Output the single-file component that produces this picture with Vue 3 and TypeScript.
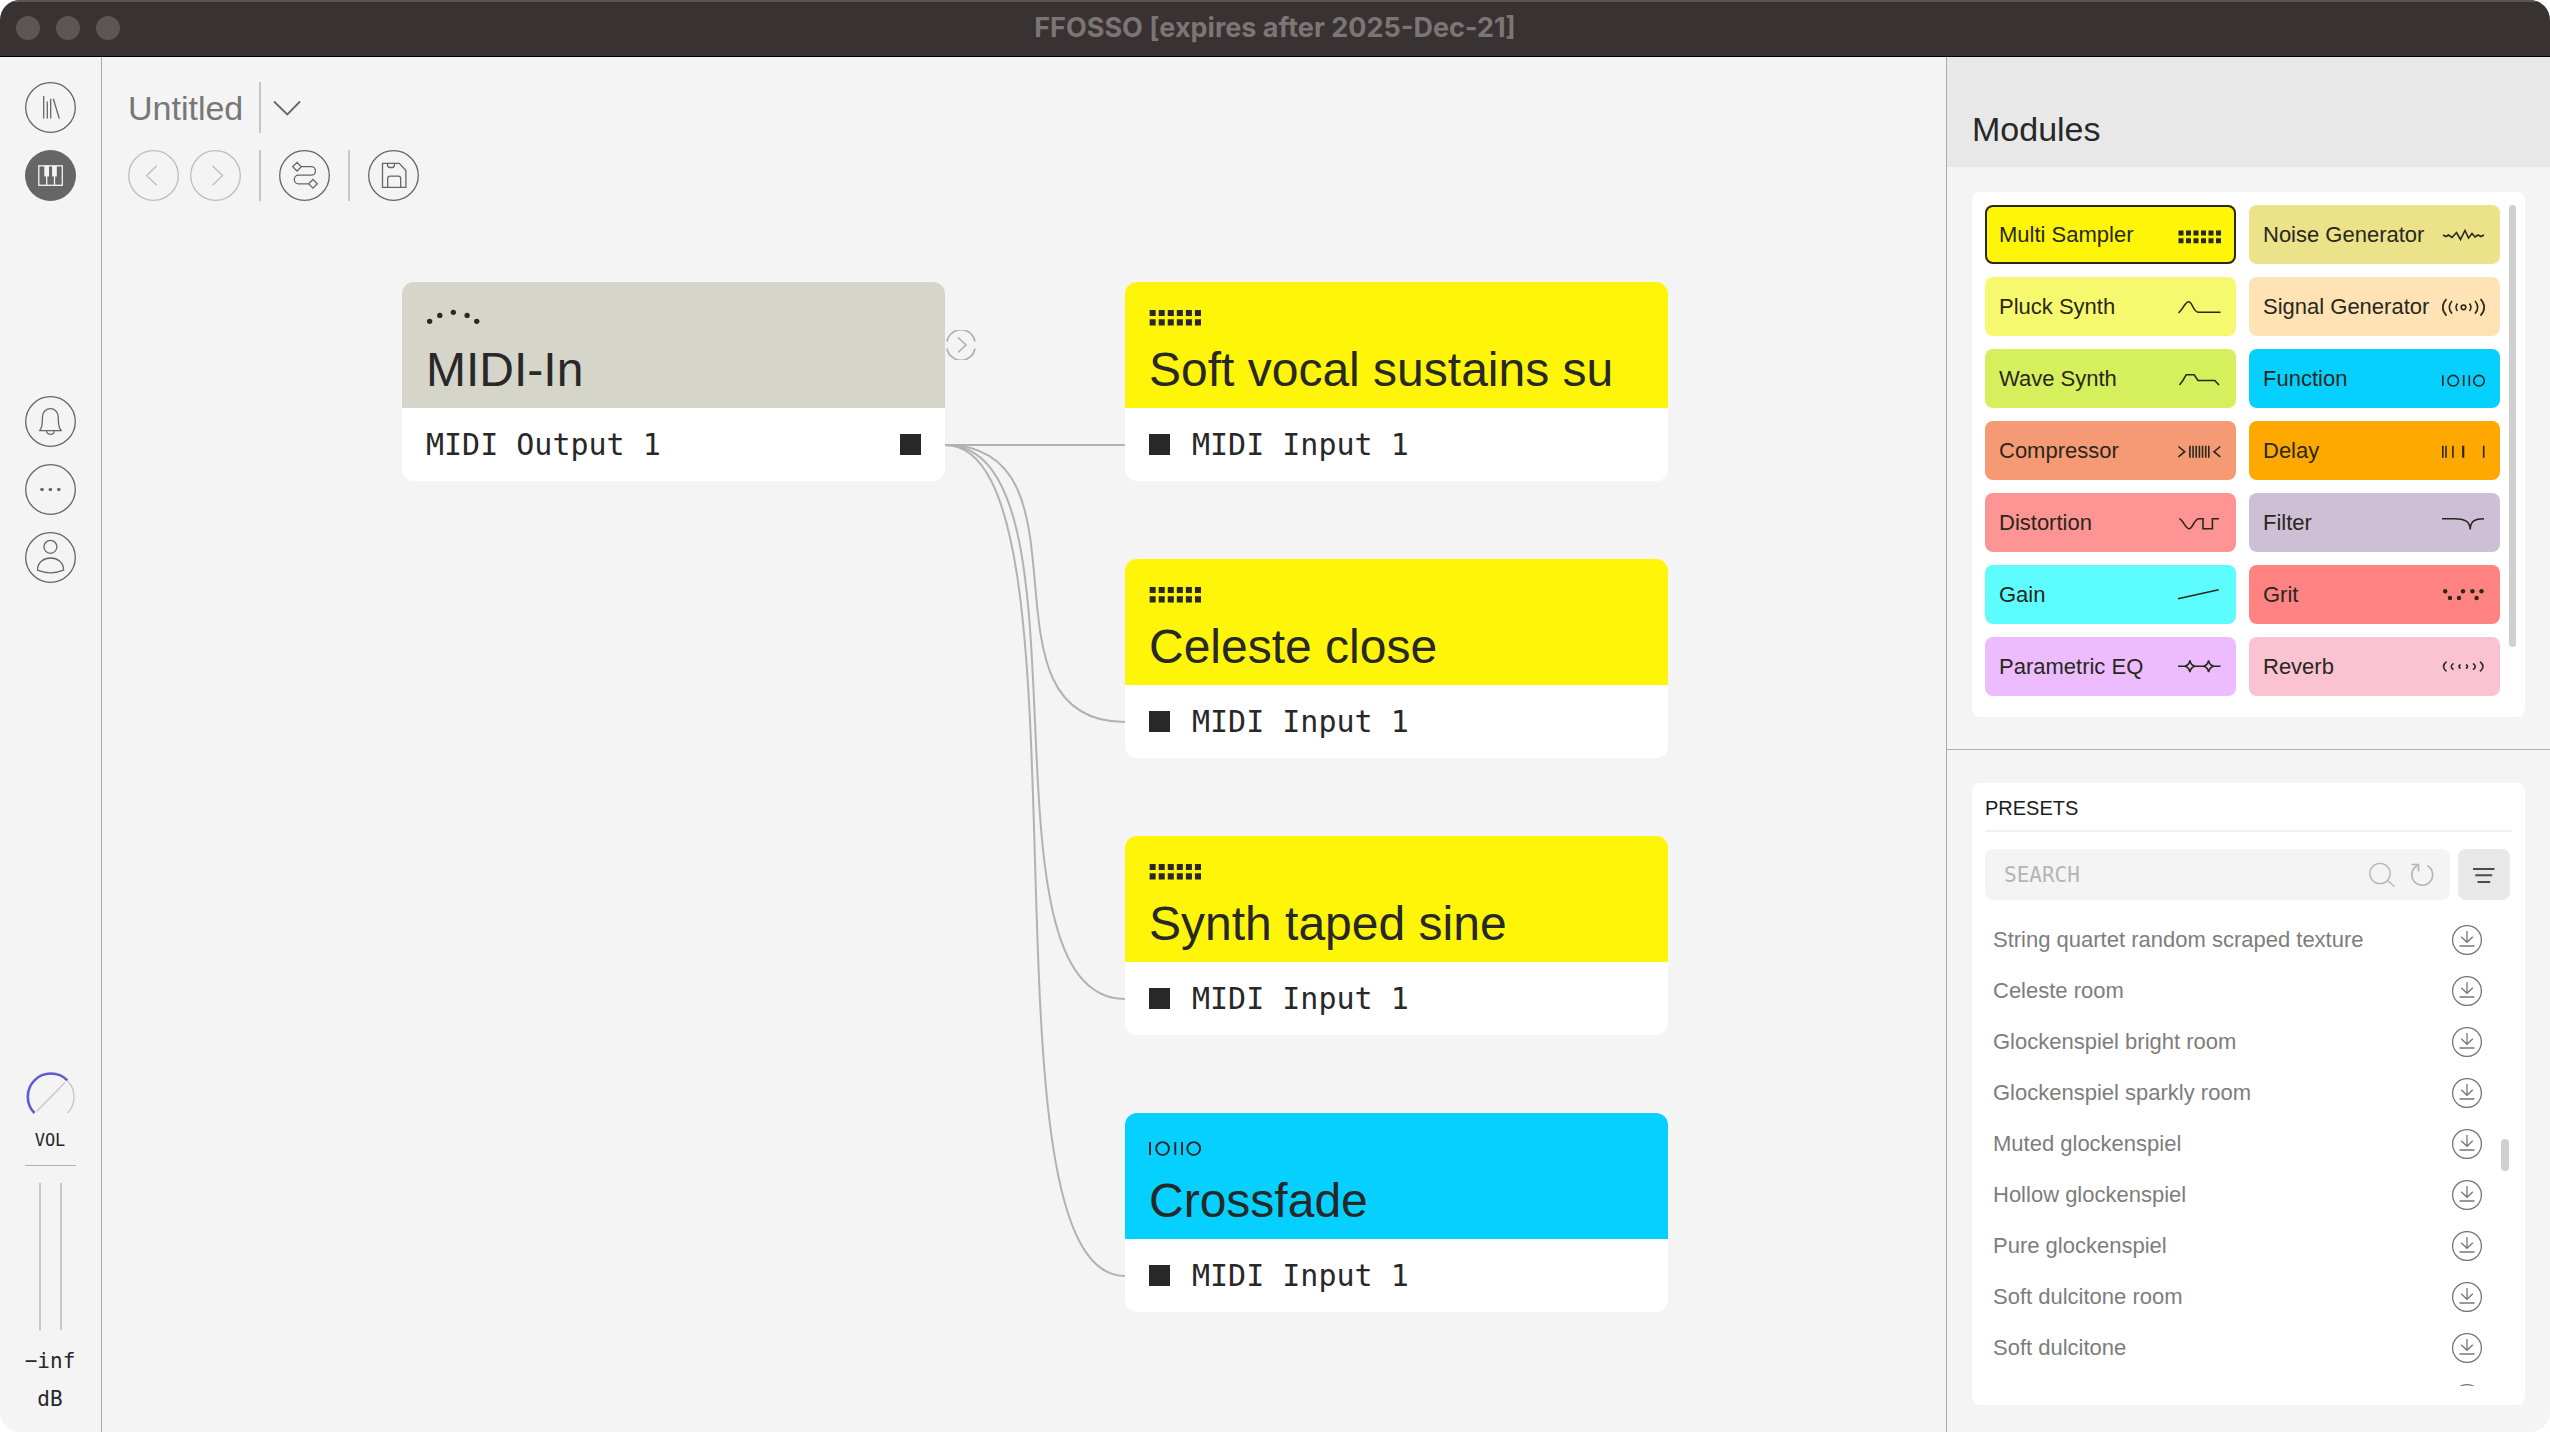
<script setup lang="ts">
import { ref } from 'vue'

interface ModuleKind { name: string; icon: string; color: string }
interface PatchNode { title: string; icon: string; color: string; x: number; y: number; port: string; output?: boolean }

const icons: Record<string, string> = {
  sampler: [0, 1, 2, 3, 4, 5].map(i => `<path class="solid" d="M${i * 7.5 + 0.5} 7.5h5v5h-5zM${i * 7.5 + 0.5} 15.2h5v5h-5z"/>`).join(''),
  noise: '<path d="M1 12L4 13.5L6.5 12L10 14.5L14.5 9.5L18.5 16.5L23 7.5L26.500 15L30 10.500L33 14L36 12L39 13.500L42 12"/>',
  pluck: '<path d="M.4 17.7C4 16 7 6.700 10.700 6.700C14.500 6.700 15 17.300 20.500 17.300H42.500"/>',
  signal: '<circle cx="21.500" cy="12.300" r="2.300"/><path d="M15.500 8.500Q12.500 12.300 15.500 16.100M27.500 8.500Q30.500 12.300 27.500 16.100M10 6Q4.500 12.300 10 18.600M33 6Q38.500 12.300 33 18.600M4.500 4Q-3 12.300 4.500 20.600M38.500 4Q46 12.300 38.500 20.600"/>',
  wave: '<path d="M1.500 18Q5 14 8.300 7.700H16.200L20 13.500H36.800L41 18"/>',
  binary: '<path d="M.8 8.300V19M21.700 8.300V19M27.300 8.300V19"/><circle cx="11.200" cy="13.700" r="5.300"/><circle cx="37" cy="13.700" r="5.300"/>',
  compressor: '<path d="M.4 7.500L6.700 12.700L.4 17.900M42.300 7.500L36 12.700L42.300 17.900M11.900 6.700v12M15.100 6.700v12M18.200 6.700v12M21.400 6.700v12M24.500 6.700v12M27.700 6.700v12M30.800 6.700v12"/>',
  delay: '<path d="M.8 6.700v12M4 6.700v12M10.900 6.700v12M41.700 6.700v12"/><path stroke-width="2.200" d="M21.200 6.700v12"/>',
  distortion: '<path d="M1.200 7.700C5 8 7 17.700 11 17.700C15 17.700 16 7.700 21 7.700H25V17.700H34.400V7.700H41"/>',
  filter: '<path d="M0 7.700H12C22 7.700 28 10 28.200 18.500C28.500 10 33 7.700 42 7.700"/>',
  gain: '<path d="M0 15.700L40.700 6.700"/>',
  grit: [[3.2, 8.3], [21, 8.3], [30.4, 8.3], [39.5, 8.3], [8, 15], [17, 15], [34.6, 15]].map(([x, y]) => `<circle class="solid" cx="${x}" cy="${y}" r="2.200"/>`).join(''),
  eq: '<path d="M0 11.200H7M16.500 11.200H26M35.500 11.200H42.500M11.900 5.400Q12.700 10.400 17.300 11.200Q12.700 12 11.900 17Q11.100 12 6.500 11.200Q11.100 10.400 11.900 5.400ZM30.600 5.400Q31.400 10.400 36 11.200Q31.400 12 30.600 17Q29.800 12 25.200 11.200Q29.800 10.400 30.600 5.400Z"/>',
  reverb: '<path d="M4.500 6.700Q-1.500 11.500 4.500 16.300M11.500 8.300Q7 11.500 11.500 14.700M18.500 9.500Q15.500 11.500 18.500 13.500M38 6.700Q44 11.500 38 16.300M31 8.300Q35.500 11.500 31 14.700M24 9.500Q27 11.500 24 13.500"/>',
  midi: [[3, 16.8], [11.4, 11.9], [22.6, 9.4], [34, 11.9], [42, 16.8]].map(([x, y]) => `<circle class="solid" cx="${x}" cy="${y}" r="2.200"/>`).join(''),
}

const modules: ModuleKind[] = [
  { name: 'Multi Sampler', icon: 'sampler', color: '#fff508' },
  { name: 'Noise Generator', icon: 'noise', color: '#ebe289' },
  { name: 'Pluck Synth', icon: 'pluck', color: '#f6f96d' },
  { name: 'Signal Generator', icon: 'signal', color: '#ffe3b4' },
  { name: 'Wave Synth', icon: 'wave', color: '#d6ef5d' },
  { name: 'Function', icon: 'binary', color: '#05d0ff' },
  { name: 'Compressor', icon: 'compressor', color: '#f59a74' },
  { name: 'Delay', icon: 'delay', color: '#ffa800' },
  { name: 'Distortion', icon: 'distortion', color: '#ff9494' },
  { name: 'Filter', icon: 'filter', color: '#cdbfd6' },
  { name: 'Gain', icon: 'gain', color: '#5cfcff' },
  { name: 'Grit', icon: 'grit', color: '#ff8383' },
  { name: 'Parametric EQ', icon: 'eq', color: '#edbcff' },
  { name: 'Reverb', icon: 'reverb', color: '#fbc2d1' },
]
const selected = ref('Multi Sampler')

const nodes: PatchNode[] = [
  { title: 'MIDI-In', icon: 'midi', color: '#d5d5c9', x: 300, y: 225, port: 'MIDI Output 1', output: true },
  { title: 'Soft vocal sustains su', icon: 'sampler', color: '#fff508', x: 1023, y: 225, port: 'MIDI Input 1' },
  { title: 'Celeste close', icon: 'sampler', color: '#fff508', x: 1023, y: 502, port: 'MIDI Input 1' },
  { title: 'Synth taped sine', icon: 'sampler', color: '#fff508', x: 1023, y: 779, port: 'MIDI Input 1' },
  { title: 'Crossfade', icon: 'binary', color: '#05d0ff', x: 1023, y: 1056, port: 'MIDI Input 1' },
]

// Cables leave the source port sideways and arrive at each input sideways.
const portOffset = 163
const nodeWidth = 543
const bend = 156
const source = nodes[0]
const cables = nodes.slice(1).map(n => {
  const x1 = source.x + nodeWidth
  const y1 = source.y + portOffset
  const y2 = n.y + portOffset
  return `M${x1} ${y1}C${x1 + bend} ${y1} ${n.x - bend} ${y2} ${n.x} ${y2}`
})

const presets = [
  'String quartet random scraped texture',
  'Celeste room',
  'Glockenspiel bright room',
  'Glockenspiel sparkly room',
  'Muted glockenspiel',
  'Hollow glockenspiel',
  'Pure glockenspiel',
  'Soft dulcitone room',
  'Soft dulcitone',
  '',
]
const search = ref('')
const volume = ref(67)
</script>

<template>
  <div class="window">
    <header class="titlebar">
      <div class="lights"><i></i><i></i><i></i></div>
      <span class="window-title">FFOSSO [expires after 2025-Dec-21]</span>
    </header>

    <div class="body">
      <nav class="rail">
        <div class="group">
          <button class="round" aria-label="Library">
            <svg viewBox="0 0 51 51"><circle cx="25.5" cy="25.5" r="24.800" /><path d="M18.700 14V36.500M22.300 19.500V36.500M25.700 16.700V36.500M28.300 16.700L34.300 36.500" /></svg>
          </button>
          <button class="round" aria-label="Keyboard">
            <svg viewBox="0 0 51 51">
              <circle cx="25.5" cy="25.5" r="25.5" fill="#666" stroke="none" />
              <g stroke="#f4f4f4"><rect x="13.800" y="15.800" width="23.500" height="19.500" /><path d="M21.700 26V35M29.500 26V35" /><path fill="#f4f4f4" stroke="none" d="M19.300 16h4.700v10.500h-4.700zM27.100 16h4.700v10.500h-4.700z" /></g>
            </svg>
          </button>
        </div>
        <div class="group middle">
          <button class="round" aria-label="Notifications">
            <svg viewBox="0 0 51 51"><circle cx="25.5" cy="25.5" r="24.800" /><path d="M14.300 34.700C16.500 33.500 17.500 27 17.500 20.500A7.800 7.800 0 0 1 33.200 20.500C33.200 27 34.200 33.500 36.700 34.700ZM21.700 35A3.800 3.400 0 0 0 29.300 35" /></svg>
          </button>
          <button class="round" aria-label="More">
            <svg viewBox="0 0 51 51"><circle cx="25.5" cy="25.5" r="24.800" /><g fill="#666" stroke="none"><circle cx="17" cy="25.500" r="1.800" /><circle cx="25.400" cy="25.500" r="1.800" /><circle cx="33.800" cy="25.500" r="1.800" /></g></svg>
          </button>
          <button class="round" aria-label="Account">
            <svg viewBox="0 0 51 51"><circle cx="25.5" cy="25.5" r="24.800" /><circle cx="25.400" cy="14.800" r="6.500" /><path d="M12.500 38.200C12.500 21.900 38.600 21.900 38.600 38.200Q25.500 43.500 12.500 38.200Z" /></svg>
          </button>
        </div>

        <div class="output">
          <label class="volume">
            <svg class="knob" viewBox="0 0 51 51">
              <path d="M11.500 40.500L40 11.500" stroke="#c6c6c6" />
              <path d="M42.300 9.500A23.300 23.300 0 0 1 42.600 42" stroke="#c6c6c6" />
              <path d="M9.500 42A23.300 23.300 0 0 1 9.500 9.300A23.300 23.300 0 0 1 42.300 9.300" stroke="#625bd0" stroke-width="2.600" />
            </svg>
            <input v-model="volume" type="range" min="0" max="100" />
            <span>VOL</span>
          </label>
          <hr />
          <div class="meters"><i></i><i></i></div>
          <div class="level"><span>−inf</span><span>dB</span></div>
        </div>
      </nav>

      <main class="canvas">
        <div class="toolbar">
          <div class="tools">
            <h1>Untitled</h1>
            <i class="sep"></i>
            <button class="drop" aria-label="Patch menu">
              <svg viewBox="0 0 28 16"><path d="M1 1.500L14.300 14.500L27 1.500" stroke-width="1.800" /></svg>
            </button>
          </div>
          <div class="tools">
            <button class="round faint" aria-label="Undo"><svg viewBox="0 0 51 51"><circle cx="25.5" cy="25.5" r="24.800" /><path d="M28.700 15.700L18.700 25.600L28.700 35.300" /></svg></button>
            <button class="round faint" aria-label="Redo"><svg viewBox="0 0 51 51"><circle cx="25.5" cy="25.5" r="24.800" /><path d="M22.500 15.700L32.500 25.600L22.500 35.300" /></svg></button>
            <i class="sep"></i>
            <button class="round" aria-label="Routing">
              <svg viewBox="0 0 51 51"><circle cx="25.5" cy="25.5" r="24.800" /><path d="M18 12.400L22.300 16.700L18 21L13.700 16.700ZM34 29.500L38.300 33.800L34 38.100L29.700 33.800ZM22.300 16.700H32.200A4.200 4.200 0 0 1 32.200 25.200H19.600A4.300 4.300 0 0 0 19.600 33.800H29.700" /></svg>
            </button>
            <i class="sep"></i>
            <button class="round" aria-label="Save">
              <svg viewBox="0 0 51 51"><circle cx="25.5" cy="25.5" r="24.800" /><path d="M14.500 13.400H31.300L37.900 20.500V37.300H14.500ZM19.500 13.400V14.500Q19.500 17.500 22 17.500H24Q26.500 17.500 26.500 14.500V13.400M19.700 37.300V28.500Q19.700 26.200 22 26.200H30.400Q32.700 26.200 32.700 28.500V37.300" /></svg>
            </button>
          </div>
        </div>

        <svg class="cables"><path v-for="d in cables" :key="d" :d="d" /></svg>
        <button class="expand" aria-label="Expand outputs">
          <svg viewBox="0 0 30 30"><path d="M1 11.500A14.200 14.200 0 0 1 29 11.500M1 18.500A14.200 14.200 0 0 0 29 18.500M12 7.500L20 15L12 22.500" /></svg>
        </button>

        <article v-for="n in nodes" :key="n.title" class="node" :style="{ left: n.x + 'px', top: n.y + 'px' }">
          <header :style="{ background: n.color }">
            <svg class="glyph" viewBox="0 0 43 24" v-html="icons[n.icon]"></svg>
            <h2>{{ n.title }}</h2>
          </header>
          <div class="port" :class="{ output: n.output }"><i></i><span>{{ n.port }}</span></div>
        </article>
      </main>

      <aside class="panel">
        <header class="panel-head"><h2>Modules</h2></header>
        <section class="modules">
          <div class="grid">
            <button v-for="m in modules" :key="m.name" class="module" :class="{ selected: selected === m.name }" :style="{ background: m.color }" @click="selected = m.name">
              <span>{{ m.name }}</span>
              <svg class="glyph" viewBox="0 0 43 24" v-html="icons[m.icon]"></svg>
            </button>
          </div>
          <i class="thumb"></i>
        </section>
        <section class="presets-area">
          <div class="presets">
            <h3>PRESETS</h3>
            <div class="search-row">
              <div class="search">
                <input v-model="search" type="text" placeholder="SEARCH" aria-label="Search presets" />
                <button aria-label="Search"><svg viewBox="0 0 28 28"><circle cx="12" cy="12.500" r="10.200" /><path d="M19.500 19.500L26.500 25.500" /></svg></button>
                <button aria-label="Reset"><svg viewBox="0 0 28 28"><path stroke-width="1.700" d="M19.500 4.800A10.400 10.400 0 1 1 9 4.800M3.500 3.500H10.500V10.500" /></svg></button>
              </div>
              <button class="sort" aria-label="Filter"><svg viewBox="0 0 52 51"><path d="M15 20H36.500M17.300 26.300H34.200M19.500 33H32.200" /></svg></button>
            </div>
            <div class="list-wrap">
              <ul>
                <li v-for="p in presets" :key="p">
                  <span>{{ p }}</span>
                  <button aria-label="Download"><svg viewBox="0 0 30 30"><circle cx="15" cy="15" r="14.400" /><path d="M15 6V17.300M9.200 11.800L15 17.300L20.800 11.800M7.500 21H22.500" /></svg></button>
                </li>
              </ul>
              <i class="thumb"></i>
            </div>
          </div>
        </section>
      </aside>
    </div>
  </div>
</template>

<style>
body { margin: 0; background: #fff; }
</style>

<style scoped>
* { box-sizing: border-box; }
h1, h2, h3, ul { margin: 0; padding: 0; font-weight: 400; list-style: none; }
button { padding: 0; border: 0; background: none; color: inherit; font: inherit; cursor: pointer; }
svg { display: block; fill: none; stroke: currentColor; stroke-width: 1.3px; }

.window {
  display: flex; flex-direction: column; height: 100vh; overflow: hidden;
  border-radius: 20px; background: #f4f4f4; color: #282828;
  font-family: "Liberation Sans", Arial, sans-serif;
}
.titlebar {
  position: relative; display: flex; flex: none; align-items: center; justify-content: center;
  height: 57px; padding-bottom: 2px; border-top: 2px solid #5b5555; border-bottom: 1px solid #000; background: #393232;
}
.lights { position: absolute; left: 16px; display: flex; gap: 16px; }
.lights i { width: 24px; height: 24px; border-radius: 50%; background: #5c5656; }
.window-title { color: #7c7575; font: 700 27px/32px Inter, sans-serif; }

.body { display: flex; flex: 1; min-height: 0; }

.rail {
  display: flex; flex: none; flex-direction: column; align-items: center;
  width: 102px; padding: 25px 1px 14px 0; border-right: 1px solid #a9a9a9; color: #666;
}
.group { display: flex; flex-direction: column; gap: 17px; }
.middle { margin-top: 195px; }
.round { flex: none; width: 51px; height: 51px; color: #666; }
.faint { color: #bdbdbd; }

.output {
  display: flex; flex-direction: column; align-items: center; margin-top: auto;
  color: #282828; font-family: "DejaVu Sans Mono", monospace;
}
.volume { position: relative; display: flex; flex-direction: column; align-items: center; gap: 8px; font-size: 17px; line-height: 20px; }
.knob { width: 51px; height: 51px; }
.volume input { position: absolute; inset: 0; width: 100%; margin: 0; opacity: 0; }
.output hr { width: 51px; height: 1px; margin: 15px 0 17px; border: 0; background: #b3b3b3; }
.meters { display: flex; gap: 19px; height: 147px; }
.meters i { width: 2px; background: #c8c8c8; }
.level { display: flex; flex-direction: column; align-items: center; margin-top: 12px; font-size: 21px; line-height: 38px; }

.canvas { position: relative; flex: 1; min-width: 0; overflow: hidden; }
.toolbar { display: flex; flex-direction: column; gap: 17px; padding: 25px 26px; }
.tools { display: flex; align-items: center; gap: 18px; height: 51px; }
.tools .faint + .faint { margin-left: -7px; }
.tools h1 { width: 113px; color: #777; font-size: 34px; line-height: 50px; white-space: nowrap; }
.sep { flex: none; width: 2px; height: 51px; background: #c6c6c6; }
.drop { width: 28px; height: 16px; margin-left: -6px; color: #666; }

.cables { position: absolute; inset: 0; width: 100%; height: 100%; color: #b2b2b2; stroke-width: 2px; pointer-events: none; }
.expand { position: absolute; left: 844px; top: 273px; width: 30px; height: 30px; color: #b2b2b2; }
.expand svg { stroke-width: 1.7px; }

.node { position: absolute; width: 543px; border-radius: 12px; overflow: hidden; background: #fff; }
.node header { display: flex; flex-direction: column; gap: 12px; height: 126px; padding: 19px 24px 0; }
.node .glyph { width: 52px; height: 29px; }
.node h2 { font-size: 48px; line-height: 56px; white-space: nowrap; }
.port { display: flex; align-items: center; gap: 22px; height: 73px; padding: 0 24px; font: 30px/36px "DejaVu Sans Mono", monospace; }
.port i { width: 21px; height: 21px; background: #282828; }
.port.output { flex-direction: row-reverse; justify-content: space-between; }

.glyph { flex: none; overflow: visible; stroke-width: 1.6px; }
.glyph :deep(.solid) { fill: currentColor; stroke: none; }

.panel { display: flex; flex: none; flex-direction: column; width: 604px; border-left: 1px solid #a9a9a9; }
.panel-head { display: flex; align-items: flex-end; height: 110px; padding: 0 25px 18px; background: #e8e8e8; }
.panel-head h2 { font-size: 34px; line-height: 40px; }
.modules { display: flex; gap: 9px; margin: 25px 25px 32px; padding: 13px 9px 21px 13px; border-radius: 8px; background: #fff; }
.grid { display: grid; flex: 1; grid-template-columns: 1fr 1fr; gap: 13px; }
.module {
  display: flex; align-items: center; justify-content: space-between; height: 59px; padding: 0 15px 0 14px;
  border-radius: 8px; color: #28281c; font-size: 22px; white-space: nowrap;
}
.module .glyph { width: 43px; height: 24px; }
.module.selected { box-shadow: inset 0 0 0 2px #28281c; }
.thumb { flex: none; width: 7px; border-radius: 4px; background: #d0d0d0; }
.modules .thumb { height: 442px; }

.presets-area { display: flex; flex: 1; min-height: 0; padding: 33px 25px 27px; border-top: 1px solid #b3b3b3; }
.presets { display: flex; flex: 1; flex-direction: column; min-width: 0; padding: 13px 13px 19px; border-radius: 8px; background: #fff; }
.presets h3 { height: 36px; border-bottom: 2px solid #f0f0f0; color: #1c1c1c; font-size: 20px; line-height: 24px; }
.search-row { display: flex; gap: 8px; margin: 17px 2px 14px 0; }
.search { display: flex; flex: 1; align-items: center; gap: 12px; height: 51px; padding: 0 14px 0 19px; border-radius: 8px; background: #f4f4f4; color: #b5b5b5; }
.search input { flex: 1; min-width: 0; padding: 0; border: 0; outline: 0; background: none; color: #282828; font: 21px/28px "DejaVu Sans Mono", monospace; }
.search input::placeholder { color: #b5b5b5; opacity: 1; }
.search button { width: 28px; height: 28px; }
.sort { width: 52px; height: 51px; border-radius: 8px; background: #e8e8e8; color: #4c4c4c; }
.sort svg { stroke-width: 2px; }
.list-wrap { display: flex; flex: 1; gap: 3px; min-height: 0; padding-right: 3px; }
ul { flex: 1; overflow: hidden; }
li { display: flex; align-items: center; justify-content: space-between; height: 51px; padding: 0 16px 0 8px; color: #7d7d7d; font-size: 22px; line-height: 28px; }
li button { width: 30px; height: 30px; color: #777; }
.list-wrap .thumb { width: 8px; height: 32px; margin-top: 225px; }
</style>
